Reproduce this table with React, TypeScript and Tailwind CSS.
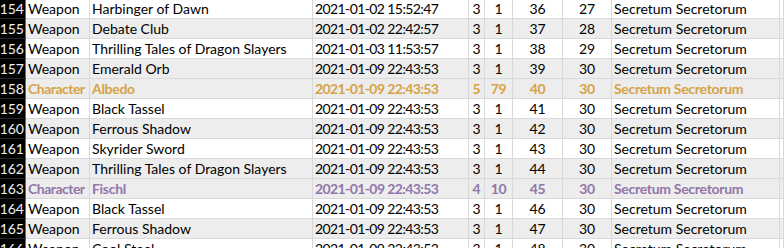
import React from 'react'

type Row = {
  n: number
  type: string
  name: string
  time: string
  stars: number
  pity: number
  total: number
  week: number
  banner: string
  tone?: 'gold' | 'purple'
}

const rows: Row[] = [
  { n: 154, type: 'Weapon', name: 'Harbinger of Dawn', time: '2021-01-02 15:52:47', stars: 3, pity: 1, total: 36, week: 27, banner: 'Secretum Secretorum' },
  { n: 155, type: 'Weapon', name: 'Debate Club', time: '2021-01-02 22:42:57', stars: 3, pity: 1, total: 37, week: 28, banner: 'Secretum Secretorum' },
  { n: 156, type: 'Weapon', name: 'Thrilling Tales of Dragon Slayers', time: '2021-01-03 11:53:57', stars: 3, pity: 1, total: 38, week: 29, banner: 'Secretum Secretorum' },
  { n: 157, type: 'Weapon', name: 'Emerald Orb', time: '2021-01-09 22:43:53', stars: 3, pity: 1, total: 39, week: 30, banner: 'Secretum Secretorum' },
  { n: 158, type: 'Character', name: 'Albedo', time: '2021-01-09 22:43:53', stars: 5, pity: 79, total: 40, week: 30, banner: 'Secretum Secretorum', tone: 'gold' },
  { n: 159, type: 'Weapon', name: 'Black Tassel', time: '2021-01-09 22:43:53', stars: 3, pity: 1, total: 41, week: 30, banner: 'Secretum Secretorum' },
  { n: 160, type: 'Weapon', name: 'Ferrous Shadow', time: '2021-01-09 22:43:53', stars: 3, pity: 1, total: 42, week: 30, banner: 'Secretum Secretorum' },
  { n: 161, type: 'Weapon', name: 'Skyrider Sword', time: '2021-01-09 22:43:53', stars: 3, pity: 1, total: 43, week: 30, banner: 'Secretum Secretorum' },
  { n: 162, type: 'Weapon', name: 'Thrilling Tales of Dragon Slayers', time: '2021-01-09 22:43:53', stars: 3, pity: 1, total: 44, week: 30, banner: 'Secretum Secretorum' },
  { n: 163, type: 'Character', name: 'Fischl', time: '2021-01-09 22:43:53', stars: 4, pity: 10, total: 45, week: 30, banner: 'Secretum Secretorum', tone: 'purple' },
  { n: 164, type: 'Weapon', name: 'Black Tassel', time: '2021-01-09 22:43:53', stars: 3, pity: 1, total: 46, week: 30, banner: 'Secretum Secretorum' },
  { n: 165, type: 'Weapon', name: 'Ferrous Shadow', time: '2021-01-09 22:43:53', stars: 3, pity: 1, total: 47, week: 30, banner: 'Secretum Secretorum' },
  { n: 166, type: 'Weapon', name: 'Cool Steel', time: '2021-01-09 22:43:53', stars: 3, pity: 1, total: 48, week: 30, banner: 'Secretum Secretorum' },
]

const shaded = new Set([155, 157, 158, 160, 162, 163, 165])

export default function App() {
  return (
    <div className="h-[248px] w-[784px] overflow-hidden bg-white font-['Lato',sans-serif] text-[14px] text-black">
      <div className="-mt-px">
        {rows.map((r) => {
          const tone =
            r.tone === 'gold'
              ? 'font-bold tracking-[-0.3px] text-[#d6a245]'
              : r.tone === 'purple'
                ? 'font-bold tracking-[-0.3px] text-[#9176aa]'
                : ''
          const bg = shaded.has(r.n) ? 'bg-[#ededed]' : 'bg-white'
          const cell = 'flex h-5 items-end border-b border-r border-[#d9d9d9] pb-[2px] leading-none whitespace-nowrap overflow-hidden'
          return (
            <div
              key={r.n}
              className={`grid grid-cols-[26px_64px_223px_156px_16px_28px_50px_49px_168px_1fr] ${bg} ${tone}`}
            >
              <div className="flex h-5 items-end justify-end border-b border-r border-b-[#262626] border-r-[#6b6b6b] bg-black pb-[2px] pr-[1px] font-normal leading-none tracking-normal text-[#f0f0f0]">
                {r.n}
              </div>
              <div className={`${cell} pl-[2px] ${r.tone ? 'tracking-[-0.5px]' : ''}`}>{r.type}</div>
              <div className={`${cell} pl-[2px]`}>{r.name}</div>
              <div className={`${cell} pl-[2px] tracking-[-0.6px]`}>{r.time}</div>
              <div className={`${cell} justify-center`}>{r.stars}</div>
              <div className={`${cell} justify-center`}>{r.pity}</div>
              <div className={`${cell} justify-center`}>{r.total}</div>
              <div className={`${cell} justify-center`}>{r.week}</div>
              <div className={`${cell} pl-[2px]`}>{r.banner}</div>
              <div className={cell} />
            </div>
          )
        })}
      </div>
    </div>
  )
}
